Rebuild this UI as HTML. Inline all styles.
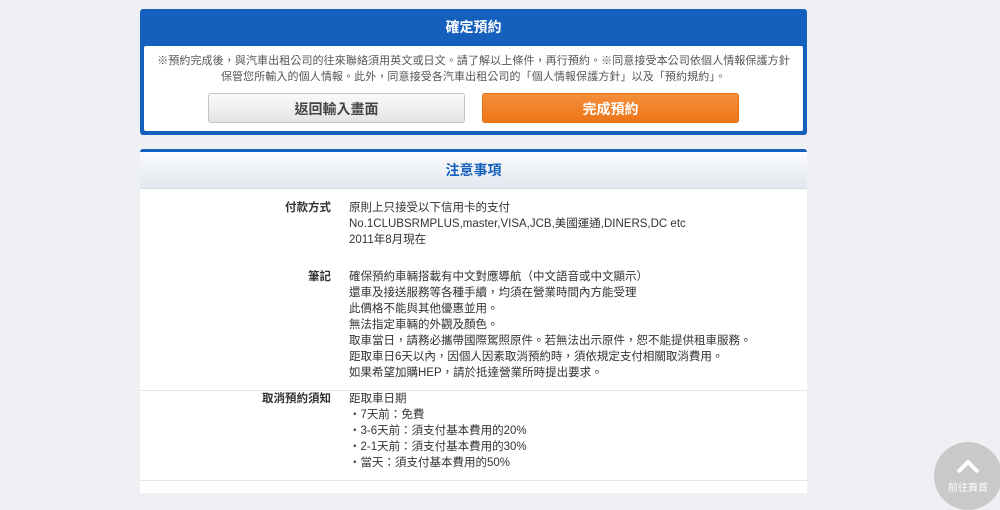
<!DOCTYPE html>
<html><head><meta charset="utf-8"><style>
*{margin:0;padding:0;box-sizing:border-box}
body{width:1000px;height:509px;background:#eff0f4;font-family:"Liberation Sans","Noto Sans CJK TC",sans-serif;position:relative;overflow:hidden;color:#333}
.b1{position:absolute;left:140px;top:9px;width:667px;height:126px;background:#1560bd;border-radius:3px}
.b1 h2{color:#fff;font-size:14px;text-align:center;line-height:36px;height:36px;font-weight:bold}
.b1 .in{position:absolute;left:4px;top:37px;right:4px;bottom:4px;background:#fff;border-radius:2px}
.note{font-size:11px;color:#555;text-align:center;line-height:16px;padding-top:7px;letter-spacing:0.1px}
.btn{position:absolute;top:47px;width:257px;height:30px;border-radius:3px;text-align:center;line-height:30px;font-size:14px;font-weight:bold}
.g{left:64px;background:linear-gradient(#fafafa,#e4e4e4);border:1px solid #c4c4c4;color:#444}
.o{left:338px;background:linear-gradient(#f48f3a,#ee7518);color:#fff;border:1px solid #e07010}
.b2{position:absolute;left:140px;top:149px;width:667px;height:344px;background:#fff;border-top:3px solid #1560bd;border-radius:3px 3px 0 0}
.b2 h3{height:37px;background:linear-gradient(#fafbfd,#e3e8ef);color:#1560bd;font-size:14px;text-align:center;line-height:37px;border-bottom:1px solid #d6dce6}
.row{position:absolute;left:0;width:667px;font-size:11.5px;line-height:16px}
.lab{position:absolute;right:476px;font-weight:bold;color:#333;white-space:nowrap}
.c{position:absolute;left:209px;white-space:nowrap;color:#333}
.hr{position:absolute;left:0;width:667px;height:1px;background:#e6e6e6}
.top{position:absolute;left:934px;top:442px;width:68px;height:68px;border-radius:50%;background:#c9c9c9;color:#fff;text-align:center;font-size:10px}
</style></head><body>
<div class="b1"><h2>確定預約</h2><div class="in">
<div class="note">※預約完成後，與汽車出租公司的往來聯絡須用英文或日文。請了解以上條件，再行預約。※同意接受本公司依個人情報保護方針<br>保管您所輸入的個人情報。此外，同意接受各汽車出租公司的「個人情報保護方針」以及「預約規約」。</div>
<div class="btn g">返回輸入畫面</div><div class="btn o">完成預約</div></div></div>
<div class="b2"><h3>注意事項</h3>
<div class="row" style="top:48px"><span class="lab">付款方式</span><div class="c">原則上只接受以下信用卡的支付<br>No.1CLUBSRMPLUS,master,VISA,JCB,美國運通,DINERS,DC etc<br>2011年8月現在</div></div>
<div class="row" style="top:117px"><span class="lab">筆記</span><div class="c">確保預約車輛搭載有中文對應導航（中文語音或中文顯示）<br>還車及接送服務等各種手續，均須在營業時間內方能受理<br>此價格不能與其他優惠並用。<br>無法指定車輛的外觀及顏色。<br>取車當日，請務必攜帶國際駕照原件。若無法出示原件，恕不能提供租車服務。<br>距取車日6天以內，因個人因素取消預約時，須依規定支付相關取消費用。<br>如果希望加購HEP，請於抵達營業所時提出要求。</div></div>
<div class="hr" style="top:238px"></div>
<div class="row" style="top:239px"><span class="lab">取消預約須知</span><div class="c">距取車日期<br>・7天前：免費<br>・3-6天前：須支付基本費用的20%<br>・2-1天前：須支付基本費用的30%<br>・當天：須支付基本費用的50%</div></div>
<div class="hr" style="top:328px"></div>
</div>
<div class="top"><svg width="26" height="16" viewBox="0 0 26 16" style="margin-top:16px"><path d="M3 14 L13 4 L23 14" stroke="#fff" stroke-width="4" fill="none"/></svg><div style="margin-top:2px">前往頁首</div></div>
</body></html>
